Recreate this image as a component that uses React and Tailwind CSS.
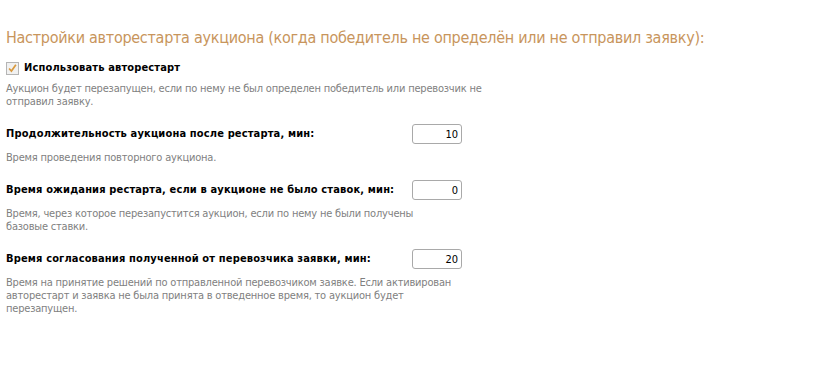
import React from "react";

const F = "font-['DejaVu_Sans_Condensed','DejaVu_Sans',sans-serif]";

function Row({ label, value, children }) {
  return (
    <div className="mt-[16px]">
      <div className="flex items-center w-[456px] justify-between h-[20px]">
        <span className="text-[11px] font-bold text-black tracking-[0.15px]">{label}</span>
        <input
          readOnly
          value={value}
          className="w-[50px] h-[20px] border border-[#a9a9a9] rounded-[3px] text-right pr-[3px] text-[11px] text-black outline-none"
        />
      </div>
      <p className="mt-[7px] text-[11px] leading-[13px] text-[#7f7f7f] w-[451px] tracking-[-0.2px]">{children}</p>
    </div>
  );
}

export default function App() {
  return (
    <div className={`${F} w-[837px] h-[379px] bg-white pl-[6px] pt-[28px]`}>
      <h2 className="text-[16px] leading-[19px] text-[#c8955c] font-normal tracking-[-0.28px]">
        Настройки авторестарта аукциона (когда победитель не определён или не отправил заявку):
      </h2>
      <div className="flex items-center mt-[13px] h-[16px]">
        <span className="w-[13px] h-[13px] border border-[#b5b5b5] bg-[#f1f1f1] flex items-center justify-center">
          <svg width="13" height="13" viewBox="0 0 13 13">
            <path d="M2.5 6.5 L5.2 9.5 L10.5 2" fill="none" stroke="#d99a3f" strokeWidth="2" />
          </svg>
        </span>
        <span className="ml-[5px] text-[11px] font-bold text-black tracking-[0.15px]">Использовать авторестарт</span>
      </div>
      <p className="mt-[6px] text-[11px] leading-[13px] text-[#7f7f7f] w-[490px] tracking-[-0.2px]">
        Аукцион будет перезапущен, если по нему не был определен победитель или перевозчик не отправил заявку.
      </p>
      <Row label="Продолжительность аукциона после рестарта, мин:" value="10">
        Время проведения повторного аукциона.
      </Row>
      <Row label="Время ожидания рестарта, если в аукционе не было ставок, мин:" value="0">
        Время, через которое перезапустится аукцион, если по нему не были получены базовые ставки.
      </Row>
      <Row label="Время согласования полученной от перевозчика заявки, мин:" value="20">
        Время на принятие решений по отправленной перевозчиком заявке. Если активирован авторестарт и заявка не была принята в отведенное время, то аукцион будет перезапущен.
      </Row>
    </div>
  );
}
